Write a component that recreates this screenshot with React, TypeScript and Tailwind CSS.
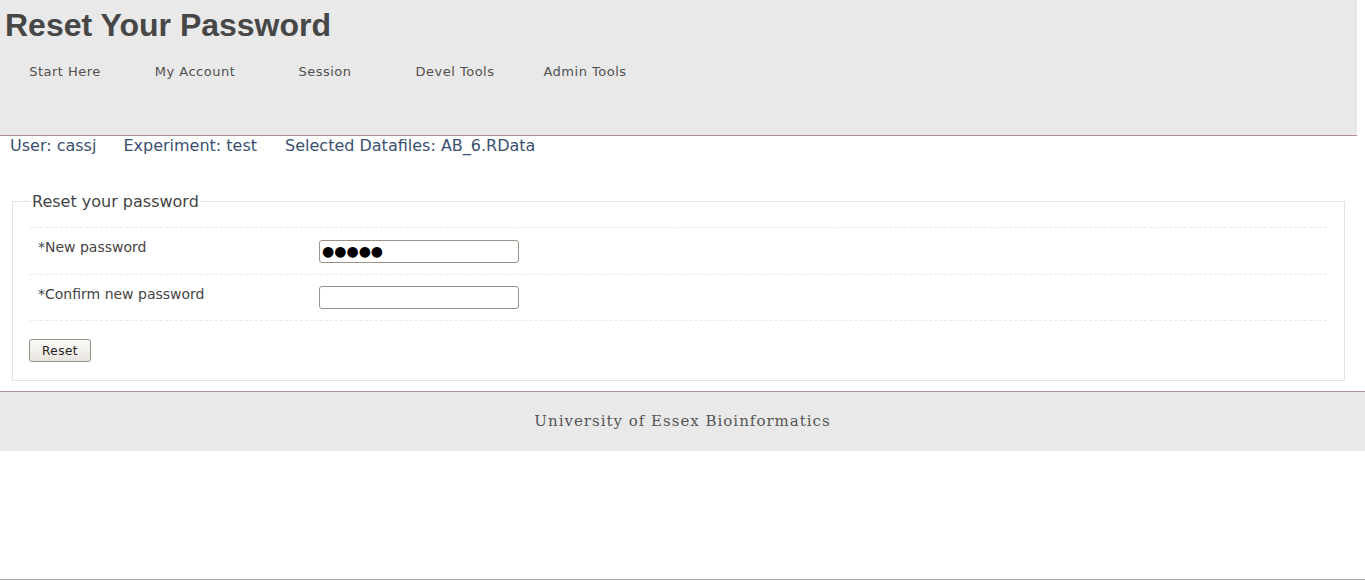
import React from "react";

const navItems = ["Start Here", "My Account", "Session", "Devel Tools", "Admin Tools"];

export default function App() {
  return (
    <div className="flex flex-col h-[580px] bg-white" style={{ fontFamily: '"DejaVu Sans", sans-serif' }}>
      <header className="w-[1357px] h-[136px] bg-[#e9e9e9] border-b border-[#b48a8a]">
        <h1
          className="pl-[5px] pt-[6px] text-[32px] leading-[38px] font-bold text-[#474747]"
          style={{ fontFamily: '"Liberation Sans", Arial, sans-serif' }}
        >
          Reset Your Password
        </h1>
        <nav className="flex mt-[20px]">
          {navItems.map((n) => (
            <div key={n} className="w-[130px] text-center text-[13px] leading-[16px] tracking-[0.5px] text-[#505050]">
              {n}
            </div>
          ))}
        </nav>
      </header>
      <div className="flex pl-[10px] text-[16px] leading-[19px] text-[#3a5070]">
        <span className="mr-[27px]">User: cassj</span>
        <span className="mr-[28px]">Experiment: test</span>
        <span>Selected Datafiles: AB_6.RData</span>
      </div>
      <div className="px-[12px] pt-[37px] pb-[10px] w-[1357px]">
        <fieldset className="border border-[#e2e2e2] px-[17px] pb-[18px] pt-[6px] mx-0">
          <legend className="px-[2px] text-[16px] leading-[19px] text-[#444]">Reset your password</legend>
          <div className="border-t border-dashed border-[#e8e8e8] mt-[10px]">
            <div className="flex items-center h-[47px] border-b border-dashed border-[#e8e8e8]">
              <label className="w-[289px] pl-[8px] text-[14px] text-[#444] self-start pt-[9px]">*New password</label>
              <input
                type="text"
                readOnly
                value="●●●●●"
                className="w-[200px] h-[23px] border border-[#9a9288] rounded-[3px] px-[2px] text-[14px] leading-[21px] outline-none text-black"
                style={{ fontFamily: '"DejaVu Sans", sans-serif' }}
              />
            </div>
            <div className="flex items-center h-[46px] border-b border-dashed border-[#e8e8e8]">
              <label className="w-[289px] pl-[8px] text-[14px] text-[#444] self-start pt-[9px]">*Confirm new password</label>
              <input
                type="password"
                className="w-[200px] h-[23px] border border-[#9a9288] rounded-[3px] px-[3px] text-[14px] outline-none"
              />
            </div>
          </div>
          <button className="mt-[18px] -ml-[1px] w-[62px] h-[23px] border border-[#9a9288] rounded-[3px] bg-gradient-to-b from-[#fbfaf8] to-[#e8e5e0] text-[12px] tracking-[0.5px] text-[#222]">
            Reset
          </button>
        </fieldset>
      </div>
      <footer className="border-t border-[#b48a8a] bg-[#e9e9e9] h-[60px] flex items-center justify-center">
        <span
          className="text-[15px] tracking-[1px] text-[#555]"
          style={{ fontFamily: '"DejaVu Serif", serif', fontWeight: 300 }}
        >
          University of Essex Bioinformatics
        </span>
      </footer>
      <div className="flex-1" />
      <div className="h-px bg-[#a8a8a8]" />
    </div>
  );
}
